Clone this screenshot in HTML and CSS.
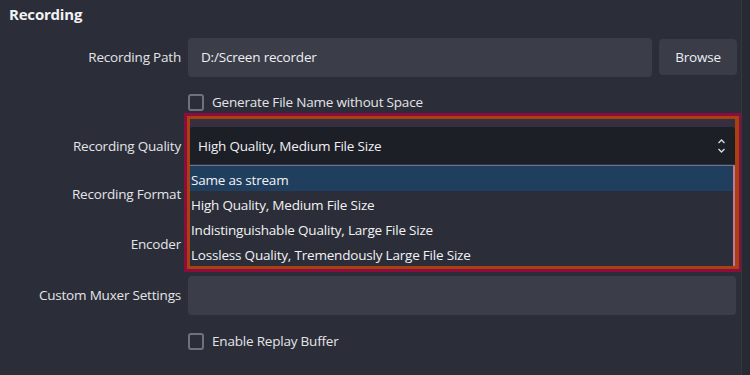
FILE: index.html
```html
<!DOCTYPE html>
<html lang="en">
  <head>
    <meta charset="UTF-8" />
    <meta name="viewport" content="width=device-width, initial-scale=1.0" />
    <title>Recording settings</title>
    <link rel="stylesheet" href="styles.css">
  </head>
  <body>
    <div class="window">
      <!-- 설정 영역 -->
      <main class="panel">
        <h2 class="title">Recording</h2>

        <div class="form">
          <label class="label">Recording Path</label>
          <div class="field path-field">
            <div class="input">D:/Screen recorder</div>
            <button class="btn">Browse</button>
          </div>

          <div class="label"></div>
          <div class="field">
            <span class="check"><i class="box"></i>Generate File Name without Space</span>
          </div>

          <label class="label">Recording Quality</label>
          <div class="highlight">
            <div class="highlight-inner">
              <div class="combo">
                <span>High Quality, Medium File Size</span>
                <svg class="arrows" width="9" height="16" viewBox="0 0 9 16">
                  <path d="M1.5 5 L4.5 2 L7.5 5" />
                  <path d="M1.5 11 L4.5 14 L7.5 11" />
                </svg>
              </div>
              <ul class="list">
                <li class="selected">Same as stream</li>
                <li>High Quality, Medium File Size</li>
                <li>Indistinguishable Quality, Large File Size</li>
                <li>Lossless Quality, Tremendously Large File Size</li>
              </ul>
            </div>
          </div>

          <label class="label">Recording Format</label>
          <label class="label">Encoder</label>

          <label class="label">Custom Muxer Settings</label>
          <div class="field">
            <div class="input wide"></div>
          </div>

          <div class="label"></div>
          <div class="field">
            <span class="check"><i class="box"></i>Enable Replay Buffer</span>
          </div>
        </div>
      </main>
      <div class="scrollbar"></div>
    </div>
  </body>
</html>
```

FILE: styles.css
```css
* {
  margin: 0;
  padding: 0;
  box-sizing: border-box;
}
html,
body {
  width: 750px;
  height: 375px;
  overflow: hidden;
  font-family: "Open Sans", "Noto Sans", sans-serif;
  font-size: 13px;
  letter-spacing: -0.2px;
  color: #e4e4e8;
  background-color: #2b2e38;
}
ul,
li {
  list-style: none;
}
.window {
  display: flex;
  height: 375px;
}
.panel {
  flex: 1;
  padding: 4px 0 0 9px;
}
.scrollbar {
  width: 9px;
  border-left: 1px solid #34373f;
  background-color: #272a32;
}
.title {
  font-size: 15px;
  font-weight: bold;
  color: #f2f2f4;
  height: 29px;
}
.form {
  display: grid;
  grid-template-columns: 172px 1fr;
  grid-template-rows: 48px 42px 46px 50px 50px 52px 40px;
  column-gap: 7px;
}
.label {
  grid-column: 1;
  display: flex;
  align-items: center;
  justify-content: flex-end;
  font-size: 13.5px;
}
.field {
  grid-column: 2;
  display: flex;
  align-items: center;
}
.path-field {
  gap: 7px;
}
.input {
  flex: 1;
  height: 39px;
  padding: 0 13px;
  display: flex;
  align-items: center;
  background-color: #3b3e49;
  border-radius: 4px;
  font-size: 13.5px;
  color: #eceef2;
}
.input.wide {
  margin-right: 5px;
}
.btn {
  width: 78px;
  height: 36px;
  margin-right: 4px;
  border: none;
  border-radius: 4px;
  background-color: #3a3d48;
  color: #eceef2;
  font-family: inherit;
  font-size: 13.5px;
  letter-spacing: -0.2px;
}
.check {
  display: flex;
  align-items: center;
  gap: 8px;
  font-size: 13.5px;
}
.box {
  width: 16px;
  height: 17px;
  border: 2px solid #6f727c;
  border-radius: 3px;
}

/* 강조 표시된 드롭다운 */
.highlight {
  grid-column: 2;
  grid-row: 3 / span 3;
  align-self: start;
  margin: -10px -1px 0 -4px;
  border: 3px solid #8c0c3e;
}
.highlight-inner {
  border: 3px solid #a8400f;
  border-right-width: 4px;
  padding-top: 8px;
  background-color: #352f3f;
}
.combo {
  height: 37px;
  display: flex;
  align-items: center;
  justify-content: space-between;
  padding: 0 9px 0 8px;
  background-color: #1d1f27;
  border-radius: 3px 3px 0 0;
  font-size: 13.5px;
  color: #f0f0f4;
}
.arrows {
  fill: none;
  stroke: #d8d8de;
  stroke-width: 1.4;
}
.list {
  margin-top: 1px;
  border-top: 1px solid #6e7396;
  border-right: 2px solid #c0799a;
  background-color: #2b2e38;
}
.list li {
  height: 25px;
  display: flex;
  align-items: center;
  padding: 2px 0 0 1px;
  font-size: 13.5px;
  color: #f2f2f4;
}
.list li.selected {
  height: 25px;
  background-color: #203e5d;
}
```
